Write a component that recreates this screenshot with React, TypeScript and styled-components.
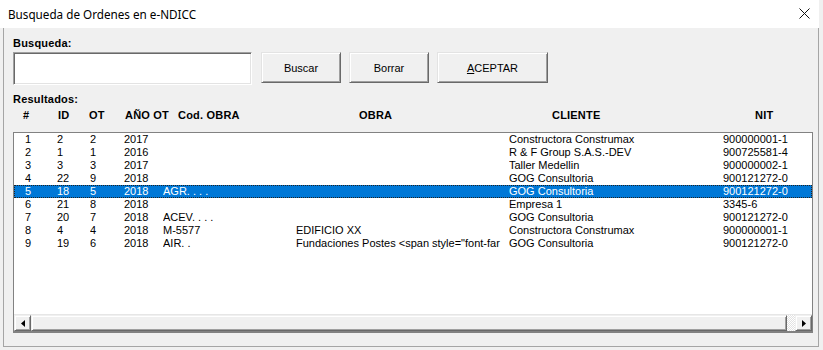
import styled, { createGlobalStyle } from "styled-components";

interface Orden {
    n: number;
    id: number;
    ot: number;
    anio: number;
    cod: string;
    obra: string;
    cliente: string;
    nit: string;
}

const ordenes: Orden[] = [
    { n: 1, id: 2, ot: 2, anio: 2017, cod: "", obra: "", cliente: "Constructora Construmax", nit: "900000001-1" },
    { n: 2, id: 1, ot: 1, anio: 2016, cod: "", obra: "", cliente: "R & F Group S.A.S.-DEV", nit: "900725581-4" },
    { n: 3, id: 3, ot: 3, anio: 2017, cod: "", obra: "", cliente: "Taller Medellin", nit: "900000002-1" },
    { n: 4, id: 22, ot: 9, anio: 2018, cod: "", obra: "", cliente: "GOG Consultoria", nit: "900121272-0" },
    { n: 5, id: 18, ot: 5, anio: 2018, cod: "AGR. . . .", obra: "", cliente: "GOG Consultoria", nit: "900121272-0" },
    { n: 6, id: 21, ot: 8, anio: 2018, cod: "", obra: "", cliente: "Empresa 1", nit: "3345-6" },
    { n: 7, id: 20, ot: 7, anio: 2018, cod: "ACEV. . . .", obra: "", cliente: "GOG Consultoria", nit: "900121272-0" },
    { n: 8, id: 4, ot: 4, anio: 2018, cod: "M-5577", obra: "EDIFICIO XX", cliente: "Constructora Construmax", nit: "900000001-1" },
    {
        n: 9,
        id: 19,
        ot: 6,
        anio: 2018,
        cod: "AIR. .",
        obra: 'Fundaciones Postes <span style="font-far',
        cliente: "GOG Consultoria",
        nit: "900121272-0",
    },
];

const SELECTED = 5;

function App() {
    return (
        <>
            <GlobalStyle />
            <Frame>
                <TitleBar>
                    <span>Busqueda de Ordenes en e-NDICC</span>
                    <svg width="11" height="11" viewBox="0 0 11 11">
                        <path d="M0.5 0.5 L10.5 10.5 M10.5 0.5 L0.5 10.5" stroke="#111" strokeWidth="1" fill="none" />
                    </svg>
                </TitleBar>
                <Body>
                    <Label>Busqueda:</Label>
                    <SearchRow>
                        <SearchInput />
                        <Button $width={80}>Buscar</Button>
                        <Button $width={80}>Borrar</Button>
                        <Button $width={111}>
                            <u>A</u>CEPTAR
                        </Button>
                    </SearchRow>
                    <Label $top={8}>Resultados:</Label>
                    <HeaderRow>
                        <span>#</span>
                        <span>ID</span>
                        <span>OT</span>
                        <span>AÑO OT</span>
                        <span>Cod. OBRA</span>
                        <span>OBRA</span>
                        <span>CLIENTE</span>
                        <span>NIT</span>
                    </HeaderRow>
                    <ListBox>
                        <Rows>
                            {ordenes.map((o) => (
                                <Row key={o.n} $selected={o.n === SELECTED}>
                                    <Cell>{o.n}</Cell>
                                    <Cell>{o.id}</Cell>
                                    <Cell>{o.ot}</Cell>
                                    <Cell>{o.anio}</Cell>
                                    <Cell>{o.cod}</Cell>
                                    <Cell $clip>{o.obra}</Cell>
                                    <Cell>{o.cliente}</Cell>
                                    <Cell>{o.nit}</Cell>
                                </Row>
                            ))}
                        </Rows>
                        <ScrollBar>
                            <ArrowButton>
                                <svg width="4" height="7" viewBox="0 0 4 7">
                                    <path d="M4 0 L0 3.5 L4 7 Z" fill="#000" />
                                </svg>
                            </ArrowButton>
                            <Thumb />
                            <Track />
                            <ArrowButton>
                                <svg width="4" height="7" viewBox="0 0 4 7">
                                    <path d="M0 0 L4 3.5 L0 7 Z" fill="#000" />
                                </svg>
                            </ArrowButton>
                        </ScrollBar>
                    </ListBox>
                </Body>
            </Frame>
        </>
    );
}

const GlobalStyle = createGlobalStyle`
    body {
        margin: 0;
        background: #f0f0f0;
        font-family: "Liberation Sans", Arial, sans-serif;
    }
`;

const Frame = styled.div`
    width: 819px;
    height: 347px;
    display: flex;
    flex-direction: column;
`;

const TitleBar = styled.div`
    height: 28px;
    flex-shrink: 0;
    background: #ffffff;
    display: flex;
    align-items: center;
    justify-content: space-between;
    padding: 0 9px 1px 8px;
    box-sizing: border-box;
    font-family: "Noto Sans", "Liberation Sans", sans-serif;
    font-size: 11.7px;
    color: #000;
`;

const Body = styled.div`
    flex: 1;
    margin-left: 3px;
    border: 1px solid #a5a5a5;
    border-top: none;
    padding: 9px 5px 0 9px;
    display: flex;
    flex-direction: column;
    font-size: 11px;
    color: #000;
`;

const Label = styled.div<{ $top?: number }>`
    font-weight: bold;
    height: 13px;
    line-height: 13px;
    margin-top: ${(p) => p.$top ?? 0}px;
    letter-spacing: 0.2px;
`;

const SearchRow = styled.div`
    display: flex;
    align-items: flex-start;
    gap: 8px;
    margin-top: 2px;
`;

const SearchInput = styled.div`
    width: 239px;
    height: 33px;
    box-sizing: border-box;
    margin-right: 1px;
    background: #ffffff;
    border: 1px solid;
    border-color: #a0a0a0 #ffffff #ffffff #a0a0a0;
    box-shadow: inset 1px 1px 0 #696969, inset -1px -1px 0 #e3e3e3;
`;

const Button = styled.div<{ $width: number }>`
    width: ${(p) => p.$width}px;
    height: 31px;
    box-sizing: border-box;
    display: flex;
    align-items: center;
    justify-content: center;
    background: #f0f0f0;
    border: 1px solid;
    border-color: #e3e3e3 #696969 #696969 #e3e3e3;
    box-shadow: inset 1px 1px 0 #ffffff, inset -1px -1px 0 #a0a0a0;
    font-size: 11px;
    color: #000;
`;

const HeaderRow = styled.div`
    display: grid;
    grid-template-columns: 35px 31px 36px 53px 181px 193px 203px 1fr;
    padding-left: 10px;
    margin-top: 3px;
    height: 13px;
    line-height: 13px;
    font-weight: bold;
    letter-spacing: 0.2px;
    white-space: nowrap;
`;

const ListBox = styled.div`
    margin-top: 10px;
    width: 800px;
    height: 201px;
    box-sizing: border-box;
    background: #ffffff;
    border: 1px solid #828282;
    border-bottom-width: 2px;
    display: flex;
    flex-direction: column;
`;

const Rows = styled.div`
    flex: 1;
`;

const Row = styled.div<{ $selected: boolean }>`
    display: grid;
    grid-template-columns: 32px 33px 34px 39px 133px 213px 214px 1fr;
    padding-left: 11px;
    height: 13px;
    line-height: 13px;
    box-sizing: border-box;
    background: ${(p) => (p.$selected ? "#0078d7" : "transparent")};
    color: ${(p) => (p.$selected ? "#ffffff" : "#000")};
    outline: ${(p) => (p.$selected ? "1px dotted #222" : "none")};
    outline-offset: -1px;
`;

const Cell = styled.span<{ $clip?: boolean }>`
    white-space: nowrap;
    overflow: hidden;
    margin-right: ${(p) => (p.$clip ? 7 : 0)}px;
`;

const ScrollBar = styled.div`
    height: 17px;
    display: flex;
    border-top: 1px solid #e6e6e6;
    box-sizing: border-box;
`;

const ArrowButton = styled.div`
    width: 17px;
    box-sizing: border-box;
    display: flex;
    align-items: center;
    justify-content: center;
    background: #f0f0f0;
    border: 1px solid;
    border-color: #f0f0f0 #696969 #696969 #f0f0f0;
    box-shadow: inset 1px 1px 0 #ffffff, inset -1px -1px 0 #a0a0a0;
`;

const Thumb = styled(ArrowButton)`
    flex: 1;
`;

const Track = styled.div`
    width: 8px;
    background-color: #ffffff;
    background-image: repeating-conic-gradient(#e2e2e2 0 25%, #ffffff 0 50%);
    background-size: 2px 2px;
`;

export default App;
